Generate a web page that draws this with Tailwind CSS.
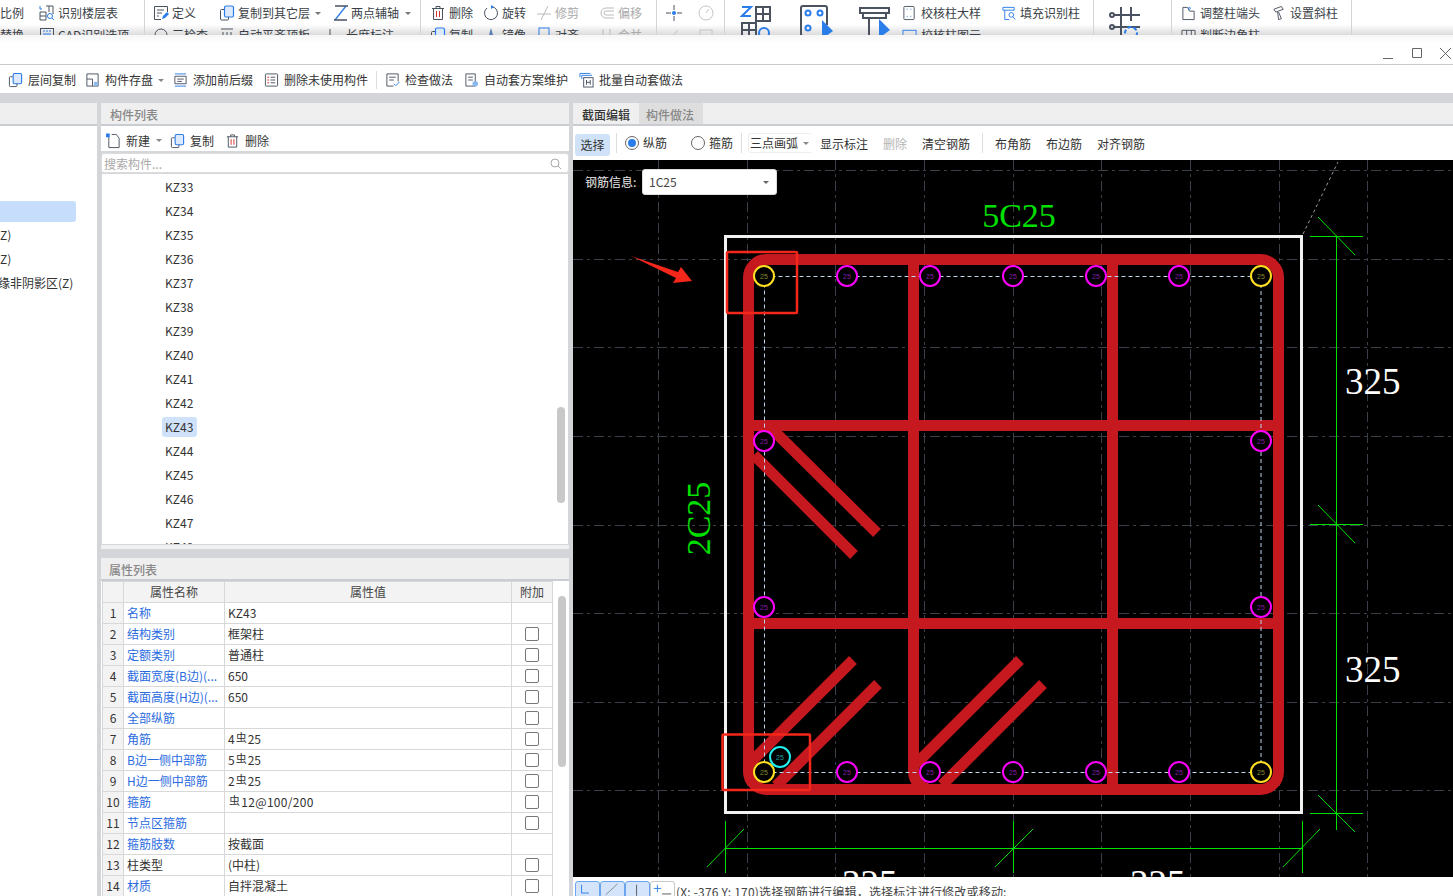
<!DOCTYPE html>
<html lang="zh-CN">
<head>
  <meta charset="UTF-8">
  <title>截面编辑</title>
  <script src="https://cdn.jsdelivr.net/npm/@tailwindcss/browser@4"></script>
</head>
<body class="bg-white">
  <!-- shared icons -->
  <svg class="hidden">
    <symbol id="i-copy" viewBox="0 0 16 16"><rect x="5.5" y="1" width="9" height="11" rx="1.5" fill="#dbe9fb" stroke="#2b7de9" stroke-width="1.2"/><path d="M5 4.5H2.5a1 1 0 0 0-1 1V14a1 1 0 0 0 1 1h6a1 1 0 0 0 1-1v-2" fill="none" stroke="#4a5260"/></symbol>
    <symbol id="i-trash" viewBox="0 0 16 16"><path d="M2 3.5h12M6 3.5V1.5h4v2M3.5 3.5v11h9v-11" fill="none" stroke="#4a5260"/><path d="M6.5 6v6M9.5 6v6" stroke="#d9302c"/></symbol>
    <symbol id="i-doc" viewBox="0 0 16 16"><path d="M14.500 7V1.500h-13v13H8" fill="none" stroke="#4a5260"/><path d="M4 5h7M4 8h5M4 11h2" stroke="#4a5260"/><path d="M9 14l1-3 4-4 2 2-4 4z" fill="#2b7de9"/></symbol>
    <symbol id="i-cols" viewBox="0 0 16 16"><path d="M2 2h12v3H2zM4 5v10h5" fill="none" stroke="#2b7de9"/><circle cx="11" cy="10" r="2.500" fill="none" stroke="#2b7de9"/><path d="M13 12l2 3" stroke="#2b7de9"/></symbol>
  </svg>

  <div class="w-[1453px] h-[896px] overflow-hidden flex flex-col text-[12px] text-[#333] font-['Noto_Sans_CJK_SC','Noto_Sans',sans-serif]">

    <!-- ribbon, cut off by the window on top of it -->
    <div class="h-[35px] shrink-0 flex overflow-hidden bg-gradient-to-b from-white from-70% to-[#dcdcdc] leading-[22px] text-[#3a3f47]">
      <div class="w-[145px] shrink-0 border-r border-[#d4d4d4] pt-[2px]">
        <div class="flex h-[22px] items-center"><span class="w-[39px] -ml-[12px]">量比例</span><svg class="w-4 h-4 ml-[12px]" viewBox="0 0 16 16" fill="none" stroke="#4a5260"><path d="M1 7h6v8H1zM1 11h6M7 1h7v8M10 1v6" /><path d="M1 1v3h2" stroke="#2b7de9"/><circle cx="11" cy="11" r="2.500" stroke="#2b7de9"/><path d="M13 13l2 2" stroke="#2b7de9"/></svg><span class="ml-[3px]">识别楼层表</span></div>
        <div class="flex h-[22px] items-center"><span class="-ml-[12px] w-[51px]">线替换</span><svg class="w-4 h-4" viewBox="0 0 16 16" fill="none" stroke="#4a5260"><rect x="1.500" y="1.500" width="13" height="12"/><path d="M4 4h2M7 4h2M10 4h2M4 7h8" stroke="#2b7de9"/></svg><span class="ml-[3px]">CAD识别选项</span></div>
      </div>
      <div class="w-[276px] shrink-0 border-r border-[#d4d4d4] pt-[2px]">
        <div class="flex h-[22px] items-center">
          <svg class="w-4 h-4 ml-[8px]" viewBox="0 0 16 16"><use href="#i-doc"/></svg><span class="ml-[3px] w-[24px]">定义</span>
          <svg class="w-4 h-4 ml-[23px]"><use href="#i-copy"/></svg><span class="ml-[3px] w-[72px]">复制到其它层</span><span class="w-0 h-0 ml-[5px] border-x-[3px] border-t-[3px] border-x-transparent border-t-[#777]"></span>
          <svg class="w-4 h-4 ml-[12px]" viewBox="0 0 16 16" fill="none" stroke="#2b7de9" stroke-width="1.300"><path d="M2 15L13 1"/><path d="M2 1h13M1 15h13" stroke="#4a5260"/></svg><span class="ml-[2px] w-[48px]">两点辅轴</span><span class="w-0 h-0 ml-[6px] border-x-[3px] border-t-[3px] border-x-transparent border-t-[#777]"></span>
        </div>
        <div class="flex h-[22px] items-center">
          <svg class="w-4 h-4 ml-[8px]" viewBox="0 0 16 16" fill="none" stroke="#4a5260"><circle cx="8" cy="8" r="6"/></svg><span class="ml-[3px] w-[36px]">三检查</span>
          <svg class="w-4 h-4 ml-[11px]" viewBox="0 0 16 16" fill="none" stroke="#4a5260"><path d="M2 2h12M4 5v9M8 5v9M12 5v9"/></svg><span class="ml-[3px] w-[72px]">自动平齐顶板</span>
          <svg class="w-4 h-4 ml-[18px]" viewBox="0 0 16 16" fill="none" stroke="#4a5260"><path d="M2 2v12h12"/></svg><span class="ml-[2px]">长度标注</span>
        </div>
      </div>
      <div class="w-[236px] shrink-0 border-r border-[#d4d4d4] pt-[2px]">
        <div class="flex h-[22px] items-center">
          <svg class="w-4 h-4 ml-[9px]"><use href="#i-trash"/></svg><span class="ml-[3px] w-[24px]">删除</span>
          <svg class="w-4 h-4 ml-[10px]" viewBox="0 0 16 16" fill="none" stroke="#4a5260"><path d="M9 1.700A6.500 6.500 0 1 1 4 3"/><path d="M8 0v4l3-2z" fill="#2b7de9" stroke="none"/></svg><span class="ml-[3px] w-[24px]">旋转</span>
          <svg class="w-4 h-4 ml-[10px]" viewBox="0 0 16 16" fill="none" stroke="#bbb"><path d="M1 9h14M12 1L5 15"/></svg><span class="ml-[3px] w-[24px] text-[#aaa]">修剪</span>
          <svg class="w-4 h-4 ml-[20px]" viewBox="0 0 16 16" fill="none" stroke="#bbb"><path d="M15 3H7a5 5 0 0 0 0 10h8M15 6H7a2 2 0 0 0 0 4h8"/></svg><span class="ml-[3px] text-[#aaa]">偏移</span>
        </div>
        <div class="flex h-[22px] items-center">
          <svg class="w-4 h-4 ml-[9px]"><use href="#i-copy"/></svg><span class="ml-[3px] w-[24px]">复制</span>
          <svg class="w-4 h-4 ml-[10px]" viewBox="0 0 16 16"><path d="M8 1l4 14H4z" fill="#5d7db5"/></svg><span class="ml-[3px] w-[24px]">镜像</span>
          <svg class="w-4 h-4 ml-[10px]" viewBox="0 0 16 16" fill="none" stroke="#2b7de9"><rect x="3" y="1" width="10" height="11"/></svg><span class="ml-[3px] w-[24px]">对齐</span>
          <svg class="w-4 h-4 ml-[20px]" viewBox="0 0 16 16" fill="none" stroke="#bbb"><path d="M4 2v12M11 2v12"/></svg><span class="ml-[3px] text-[#aaa]">合并</span>
        </div>
      </div>
      <div class="w-[68px] shrink-0 border-r border-[#d4d4d4] pt-[2px]">
        <div class="flex h-[22px] items-center gap-[16px] pl-[9px]">
          <svg class="w-4 h-4" viewBox="0 0 16 16" fill="none" stroke="#4a5260"><path d="M8 0v5M8 11v5M0 8h5M11 8h5"/><circle cx="8" cy="8" r="2" fill="#2b7de9" stroke="none"/></svg>
          <svg class="w-4 h-4" viewBox="0 0 16 16" fill="none" stroke="#c4c4c4"><circle cx="8" cy="8" r="7"/><path d="M8 8l3-4"/></svg>
        </div>
        <div class="flex h-[22px] items-center gap-[16px] pl-[9px]">
          <svg class="w-4 h-4" viewBox="0 0 16 16" fill="none" stroke="#c4c4c4"><path d="M3 13L12 3"/></svg>
          <svg class="w-4 h-4" viewBox="0 0 16 16" fill="none" stroke="#c4c4c4"><rect x="2" y="3" width="12" height="10"/></svg>
        </div>
      </div>
      <div class="w-[369px] shrink-0 flex border-r border-[#d4d4d4] pt-[5px]">
        <svg class="w-[32px] h-[36px] ml-[15px] shrink-0" viewBox="0 0 32 36" fill="none" stroke="#4a5260" stroke-width="2"><path d="M2 2h9L2 11h9" stroke="#2b7de9"/><path d="M16 2h14v14H16zM23 2v14M16 9h14M2 18h14v14H2zM9 18v14M2 25h14"/><circle cx="24" cy="28" r="5" stroke="#2b7de9"/></svg>
        <svg class="w-[34px] h-[36px] ml-[28px] shrink-0" viewBox="0 0 34 36" fill="none" stroke="#4a5260" stroke-width="2"><path d="M27 20V3a2 2 0 0 0-2-2H3a2 2 0 0 0-2 2v26a2 2 0 0 0 2 2h16"/><circle cx="8" cy="8" r="2.500" stroke="#2b7de9"/><circle cx="20" cy="8" r="2.500" stroke="#2b7de9"/><circle cx="8" cy="23" r="2.500" stroke="#2b7de9"/><path d="M22 15l11 11-11 8z" fill="#2b7de9" stroke="none"/></svg>
        <svg class="w-[32px] h-[36px] ml-[25px] shrink-0" viewBox="0 0 32 36" fill="none" stroke="#4a5260" stroke-width="2"><path d="M1 3h29v5H1zM4 8v5h23V8M10 13v19h6"/><path d="M20 14l11 11-11 8z" fill="#2b7de9" stroke="none"/></svg>
        <div class="ml-[11px] -mt-[3px]">
          <div class="flex h-[22px] items-center">
            <svg class="w-[15px] h-4" viewBox="0 0 16 16" fill="none" stroke="#4a5260"><rect x="2" y="1" width="11" height="14" rx="1"/><path d="M5 4h1M9 4h1M5 12h1M10 11l-1 1" stroke="#2b7de9"/></svg><span class="ml-[4px] w-[60px]">校核柱大样</span>
            <svg class="w-[15px] h-4 ml-[20px]" viewBox="0 0 16 16"><use href="#i-cols"/></svg><span class="ml-[4px]">填充识别柱</span>
          </div>
          <div class="flex h-[22px] items-center">
            <svg class="w-[15px] h-4" viewBox="0 0 16 16" fill="none" stroke="#2b7de9"><rect x="1" y="3" width="14" height="6"/></svg><span class="ml-[4px]">校核柱图元</span>
          </div>
        </div>
      </div>
      <div class="w-[78px] shrink-0 border-r border-[#d4d4d4] pt-[5px] pl-[15px]">
        <svg class="w-[32px] h-[36px]" viewBox="0 0 32 36" fill="none" stroke="#4a5260" stroke-width="2"><path d="M12 2v34M22 2v14M5 10h26M5 22h26"/><circle cx="3" cy="10" r="2"/><circle cx="3" cy="22" r="2"/><circle cx="22" cy="28" r="6" stroke="#2b7de9" stroke-dasharray="4 2"/></svg>
      </div>
      <div class="w-[180px] shrink-0 border-r border-[#d4d4d4] pt-[2px]">
        <div class="flex h-[22px] items-center">
          <svg class="w-[15px] h-4 ml-[9px]" viewBox="0 0 16 16" fill="none" stroke="#4a5260"><path d="M2 2h5l2 4h5v9H2z"/><circle cx="9" cy="3" r="1" stroke="#2b7de9"/></svg><span class="ml-[4px] w-[60px]">调整柱端头</span>
          <svg class="w-[15px] h-4 ml-[12px]" viewBox="0 0 16 16" fill="none" stroke="#4a5260"><path d="M2 4l8-3 2 3-8 3zM6 7l1 8 3-1-3-7"/></svg><span class="ml-[3px]">设置斜柱</span>
        </div>
        <div class="flex h-[22px] items-center">
          <svg class="w-[15px] h-4 ml-[9px]" viewBox="0 0 16 16" fill="none" stroke="#4a5260"><path d="M1 3h14v10H1zM6 3v10M11 3v10"/></svg><span class="ml-[4px]">判断边角柱</span>
        </div>
      </div>
      <div class="flex-1"></div>
    </div>

    <!-- window title bar -->
    <div class="h-[30px] shrink-0 bg-gradient-to-b from-[#f6f6f6] to-white to-30% border-b border-[#c6cace] flex items-center justify-end pt-[6px]">
      <svg class="w-[70px] h-[14px]" viewBox="0 0 70 14" fill="none" stroke="#666"><path d="M0 12.500H10M29.500 2.500h9v9h-9zM57 2l11 11M68 2L57 13"/></svg>
    </div>

    <!-- main toolbar -->
    <div class="h-[28px] shrink-0 bg-white flex items-center pt-[2px]">
      <svg class="w-[15px] h-4 ml-[8px]"><use href="#i-copy"/></svg><span class="ml-[5px] w-[48px]">层间复制</span>
      <svg class="w-[15px] h-4 ml-[9px]" viewBox="0 0 16 16" fill="none" stroke="#4a5260"><path d="M2 1.500h12v13H2zM2 7h6v7.500"/><rect x="9.500" y="10" width="4" height="4" fill="#8bb8ef" stroke="none"/></svg><span class="ml-[5px] w-[48px]">构件存盘</span>
      <span class="w-0 h-0 ml-[5px] border-x-[3px] border-t-[3px] border-x-transparent border-t-[#888]"></span>
      <svg class="w-[15px] h-4 ml-[9px]" viewBox="0 0 16 16" fill="none" stroke="#2b7de9"><path d="M2 1.500h12M2 14.500h12"/><path d="M2 4h12v8H2zM4.500 7h7M4.500 9.500h5" stroke="#4a5260"/></svg><span class="ml-[5px] w-[60px]">添加前后缀</span>
      <svg class="w-[15px] h-4 ml-[11px]" viewBox="0 0 16 16" fill="none" stroke="#4a5260"><rect x="1.500" y="1.500" width="13" height="13" rx="1"/><path d="M7 5h5M7 8h5M7 11h5"/><path d="M3.500 5h2M3.500 8h2M3.500 11h2" stroke="#e0322c"/></svg><span class="ml-[5px] w-[84px]">删除未使用构件</span>
      <span class="w-px h-[18px] ml-[8px] bg-[#ddd]"></span>
      <svg class="w-[15px] h-4 ml-[8px]" viewBox="0 0 16 16" fill="none" stroke="#4a5260"><path d="M9 14.500H2V1.500h12v8M4.500 5h7M4.500 8h5"/><path d="M9.500 12l2 2 4-4" stroke="#2b7de9"/></svg><span class="ml-[5px] w-[48px]">检查做法</span>
      <svg class="w-[15px] h-4 ml-[11px]" viewBox="0 0 16 16" fill="none" stroke="#4a5260"><path d="M2 1.500h10v13H2zM4.500 5h5M4.500 8h5"/><circle cx="12" cy="12" r="3" fill="#8bb8ef" stroke="none"/></svg><span class="ml-[5px] w-[84px]">自动套方案维护</span>
      <svg class="w-[15px] h-4 ml-[11px]" viewBox="0 0 16 16" fill="none" stroke="#4a5260"><path d="M1 5V1h11" stroke="#2b7de9"/><path d="M3 7V3h11" stroke="#2b7de9"/><rect x="5" y="5.500" width="10" height="10"/><path d="M8 8v5M12 8v5M8 10.500h4"/></svg><span class="ml-[5px]">批量自动套做法</span>
    </div>

    <!-- panels -->
    <div class="flex-1 min-h-0 flex bg-[#d3d5d9] pt-[10px]">

      <!-- navigation tree (mostly cut off) -->
      <div class="w-[97px] shrink-0 bg-white flex flex-col">
        <div class="h-[23px] shrink-0 bg-[#efefef] border-b-2 border-[#c9ccd0]"></div>
        <div class="pt-[75px] flex flex-col">
          <div class="h-[21px] w-[76px] rounded-r-[3px] bg-[#c6ddfb]"></div>
          <div class="h-[24px] mt-[1px] leading-[24px] whitespace-nowrap">Z)</div>
          <div class="h-[24px] leading-[24px] whitespace-nowrap">Z)</div>
          <div class="h-[24px] leading-[24px] whitespace-nowrap -ml-[2px]">缘非阴影区(Z)</div>
        </div>
      </div>

      <!-- component list and properties -->
      <div class="w-[468px] ml-[4px] shrink-0 flex flex-col">
        <div class="h-[23px] shrink-0 bg-[#efefef] border-b-2 border-[#c9ccd0] px-[9px] leading-[23px] font-medium text-[#888]">构件列表</div>
        <div class="h-[27px] shrink-0 bg-white border-b-2 border-[#d5d7da] flex items-center pt-[4px]">
          <svg class="w-[15px] h-4 ml-[5px]" viewBox="0 0 16 16" fill="none" stroke="#4a5260"><path d="M3 3v12h11V5l-3-4H6"/><rect x="0" y="0" width="4" height="4" fill="#2b7de9" stroke="none"/></svg><span class="ml-[5px] w-[24px]">新建</span>
          <span class="w-0 h-0 ml-[6px] border-x-[3px] border-t-[3px] border-x-transparent border-t-[#888]"></span>
          <svg class="w-[15px] h-4 ml-[8px]"><use href="#i-copy"/></svg><span class="ml-[5px] w-[24px]">复制</span>
          <svg class="w-[15px] h-4 ml-[11px]"><use href="#i-trash"/></svg><span class="ml-[5px]">删除</span>
        </div>
        <div class="h-[20px] shrink-0 bg-white border border-[#dcdcdc] rounded-[3px] flex items-center justify-between pl-[2px] pr-[6px] pt-px text-[#aaa]">
          <span>搜索构件...</span>
          <svg class="w-3 h-3" viewBox="0 0 12 12" fill="none" stroke="#aaa"><circle cx="5" cy="5" r="4"/><path d="M8 8l3 3"/></svg>
        </div>
        <div class="relative h-[372px] shrink-0 bg-white border border-[#d5d7da] overflow-hidden pl-[60px] pt-px">
          <div class="h-[24px] leading-[24px] pl-[3px]">KZ33</div>
          <div class="h-[24px] leading-[24px] pl-[3px]">KZ34</div>
          <div class="h-[24px] leading-[24px] pl-[3px]">KZ35</div>
          <div class="h-[24px] leading-[24px] pl-[3px]">KZ36</div>
          <div class="h-[24px] leading-[24px] pl-[3px]">KZ37</div>
          <div class="h-[24px] leading-[24px] pl-[3px]">KZ38</div>
          <div class="h-[24px] leading-[24px] pl-[3px]">KZ39</div>
          <div class="h-[24px] leading-[24px] pl-[3px]">KZ40</div>
          <div class="h-[24px] leading-[24px] pl-[3px]">KZ41</div>
          <div class="h-[24px] leading-[24px] pl-[3px]">KZ42</div>
          <div class="h-[24px] flex items-center"><span class="h-[20px] w-[35px] pl-[3px] leading-[20px] rounded-[3px] bg-[#cfe2f9]">KZ43</span></div>
          <div class="h-[24px] leading-[24px] pl-[3px]">KZ44</div>
          <div class="h-[24px] leading-[24px] pl-[3px]">KZ45</div>
          <div class="h-[24px] leading-[24px] pl-[3px]">KZ46</div>
          <div class="h-[24px] leading-[24px] pl-[3px]">KZ47</div>
          <div class="h-[24px] leading-[24px] pl-[3px]">KZ48</div>
          <div class="absolute right-[3px] top-[233px] w-[8px] h-[96px] rounded-full bg-[#c8c8c8]"></div>
        </div>
        <div class="h-[4px] shrink-0 bg-[#f0f0f0]"></div>
        <div class="h-[9px] shrink-0"></div>
        <div class="h-[23px] shrink-0 bg-[#efefef] border-b-2 border-[#c9ccd0] px-[8px] leading-[23px] font-medium text-[#888]">属性列表</div>
        <div class="relative flex-1 min-h-0 bg-white overflow-hidden pl-px">
          <table class="table-fixed border-collapse w-[450px] text-[12px]">
            <colgroup><col class="w-[21px]"><col class="w-[101px]"><col class="w-[287px]"><col class="w-[41px]"></colgroup>
            <thead>
              <tr class="h-[21px] bg-[#f3f3f3] font-normal text-[#444]">
                <th class="border border-[#d8d8d8] font-normal"></th>
                <th class="border border-[#d8d8d8] font-normal">属性名称</th>
                <th class="border border-[#d8d8d8] font-normal">属性值</th>
                <th class="border border-[#d8d8d8] font-normal">附加</th>
              </tr>
            </thead>
            <tbody>
              <tr class="h-[21px]"><td class="border border-[#d8d8d8] bg-[#f3f3f3] text-center">1</td><td class="border border-[#d8d8d8] px-[3px] text-[#2a6be0] whitespace-nowrap overflow-hidden">名称</td><td class="border border-[#d8d8d8] px-[3px]">KZ43</td><td class="border border-[#d8d8d8]"></td></tr>
              <tr class="h-[21px]"><td class="border border-[#d8d8d8] bg-[#f3f3f3] text-center">2</td><td class="border border-[#d8d8d8] px-[3px] text-[#2a6be0] whitespace-nowrap overflow-hidden">结构类别</td><td class="border border-[#d8d8d8] px-[3px]">框架柱</td><td class="border border-[#d8d8d8]"><div class="w-[14px] h-[14px] mx-auto rounded-[2px] border border-[#777]"></div></td></tr>
              <tr class="h-[21px]"><td class="border border-[#d8d8d8] bg-[#f3f3f3] text-center">3</td><td class="border border-[#d8d8d8] px-[3px] text-[#2a6be0] whitespace-nowrap overflow-hidden">定额类别</td><td class="border border-[#d8d8d8] px-[3px]">普通柱</td><td class="border border-[#d8d8d8]"><div class="w-[14px] h-[14px] mx-auto rounded-[2px] border border-[#777]"></div></td></tr>
              <tr class="h-[21px]"><td class="border border-[#d8d8d8] bg-[#f3f3f3] text-center">4</td><td class="border border-[#d8d8d8] px-[3px] text-[#2a6be0] whitespace-nowrap overflow-hidden">截面宽度(B边)(...</td><td class="border border-[#d8d8d8] px-[3px]">650</td><td class="border border-[#d8d8d8]"><div class="w-[14px] h-[14px] mx-auto rounded-[2px] border border-[#777]"></div></td></tr>
              <tr class="h-[21px]"><td class="border border-[#d8d8d8] bg-[#f3f3f3] text-center">5</td><td class="border border-[#d8d8d8] px-[3px] text-[#2a6be0] whitespace-nowrap overflow-hidden">截面高度(H边)(...</td><td class="border border-[#d8d8d8] px-[3px]">650</td><td class="border border-[#d8d8d8]"><div class="w-[14px] h-[14px] mx-auto rounded-[2px] border border-[#777]"></div></td></tr>
              <tr class="h-[21px]"><td class="border border-[#d8d8d8] bg-[#f3f3f3] text-center">6</td><td class="border border-[#d8d8d8] px-[3px] text-[#2a6be0] whitespace-nowrap overflow-hidden">全部纵筋</td><td class="border border-[#d8d8d8] px-[3px]"></td><td class="border border-[#d8d8d8]"><div class="w-[14px] h-[14px] mx-auto rounded-[2px] border border-[#777]"></div></td></tr>
              <tr class="h-[21px]"><td class="border border-[#d8d8d8] bg-[#f3f3f3] text-center">7</td><td class="border border-[#d8d8d8] px-[3px] text-[#2a6be0] whitespace-nowrap overflow-hidden">角筋</td><td class="border border-[#d8d8d8] px-[3px] leading-none">4<span class="text-[11px] px-px relative -top-[2px]">虫</span>25</td><td class="border border-[#d8d8d8]"><div class="w-[14px] h-[14px] mx-auto rounded-[2px] border border-[#777]"></div></td></tr>
              <tr class="h-[21px]"><td class="border border-[#d8d8d8] bg-[#f3f3f3] text-center">8</td><td class="border border-[#d8d8d8] px-[3px] text-[#2a6be0] whitespace-nowrap overflow-hidden">B边一侧中部筋</td><td class="border border-[#d8d8d8] px-[3px] leading-none">5<span class="text-[11px] px-px relative -top-[2px]">虫</span>25</td><td class="border border-[#d8d8d8]"><div class="w-[14px] h-[14px] mx-auto rounded-[2px] border border-[#777]"></div></td></tr>
              <tr class="h-[21px]"><td class="border border-[#d8d8d8] bg-[#f3f3f3] text-center">9</td><td class="border border-[#d8d8d8] px-[3px] text-[#2a6be0] whitespace-nowrap overflow-hidden">H边一侧中部筋</td><td class="border border-[#d8d8d8] px-[3px] leading-none">2<span class="text-[11px] px-px relative -top-[2px]">虫</span>25</td><td class="border border-[#d8d8d8]"><div class="w-[14px] h-[14px] mx-auto rounded-[2px] border border-[#777]"></div></td></tr>
              <tr class="h-[21px]"><td class="border border-[#d8d8d8] bg-[#f3f3f3] text-center">10</td><td class="border border-[#d8d8d8] px-[3px] text-[#2a6be0] whitespace-nowrap overflow-hidden">箍筋</td><td class="border border-[#d8d8d8] px-[3px] leading-none tracking-[0.3px]"><span class="text-[11px] px-px relative -top-[2px]">虫</span>12@100/200</td><td class="border border-[#d8d8d8]"><div class="w-[14px] h-[14px] mx-auto rounded-[2px] border border-[#777]"></div></td></tr>
              <tr class="h-[21px]"><td class="border border-[#d8d8d8] bg-[#f3f3f3] text-center">11</td><td class="border border-[#d8d8d8] px-[3px] text-[#2a6be0] whitespace-nowrap overflow-hidden">节点区箍筋</td><td class="border border-[#d8d8d8] px-[3px]"></td><td class="border border-[#d8d8d8]"><div class="w-[14px] h-[14px] mx-auto rounded-[2px] border border-[#777]"></div></td></tr>
              <tr class="h-[21px]"><td class="border border-[#d8d8d8] bg-[#f3f3f3] text-center">12</td><td class="border border-[#d8d8d8] px-[3px] text-[#2a6be0] whitespace-nowrap overflow-hidden">箍筋肢数</td><td class="border border-[#d8d8d8] px-[3px]">按截面</td><td class="border border-[#d8d8d8]"></td></tr>
              <tr class="h-[21px]"><td class="border border-[#d8d8d8] bg-[#f3f3f3] text-center">13</td><td class="border border-[#d8d8d8] px-[3px] whitespace-nowrap overflow-hidden">柱类型</td><td class="border border-[#d8d8d8] px-[3px]">(中柱)</td><td class="border border-[#d8d8d8]"><div class="w-[14px] h-[14px] mx-auto rounded-[2px] border border-[#777]"></div></td></tr>
              <tr class="h-[21px]"><td class="border border-[#d8d8d8] bg-[#f3f3f3] text-center">14</td><td class="border border-[#d8d8d8] px-[3px] text-[#2a6be0] whitespace-nowrap overflow-hidden">材质</td><td class="border border-[#d8d8d8] px-[3px]">自拌混凝土</td><td class="border border-[#d8d8d8]"><div class="w-[14px] h-[14px] mx-auto rounded-[2px] border border-[#777]"></div></td></tr>
            </tbody>
          </table>
          <div class="absolute right-[3px] top-[15px] w-[8px] h-[171px] rounded-full bg-[#c8c8c8]"></div>
        </div>
      </div>

      <!-- section editor -->
      <div class="w-[880px] ml-[4px] shrink-0 flex flex-col bg-white">
        <div class="h-[23px] shrink-0 bg-[#efefef] border-b-2 border-[#c9ccd0] flex leading-[23px] font-medium">
          <div class="w-[66px] pl-[9px] text-[#333]">截面编辑</div>
          <div class="w-[64px] pl-[7px] bg-[#dedede] text-[#888]">构件做法</div>
        </div>
        <div class="h-[34px] shrink-0 flex items-center">
          <span class="ml-[2px] w-[35px] h-[22px] mt-[3px] text-center leading-[22px] rounded-[3px] bg-[#cfe2f7]">选择</span>
          <span class="w-px h-[20px] ml-[6px] bg-[#ddd]"></span>
          <span class="ml-[8px] w-[14px] h-[14px] rounded-full border border-[#666] bg-white flex items-center justify-center"><span class="w-[8px] h-[8px] rounded-full bg-[#2b7de9]"></span></span>
          <span class="ml-[4px] w-[24px]">纵筋</span>
          <span class="ml-[24px] w-[14px] h-[14px] rounded-full border border-[#666] bg-white"></span>
          <span class="ml-[4px] w-[24px]">箍筋</span>
          <span class="w-px h-[20px] ml-[8px] bg-[#ddd]"></span>
          <div class="ml-[6px] w-[65px] h-[20px] shrink-0 flex items-center pl-px rounded-[3px] border border-[#efefef] border-r-0">
            <span class="w-[48px]">三点画弧</span>
            <span class="w-0 h-0 ml-[5px] border-x-[3px] border-t-[3px] border-x-transparent border-t-[#888]"></span>
          </div>
          <span class="ml-[7px] w-[48px] mt-[2px]">显示标注</span>
          <span class="ml-[15px] w-[24px] mt-[2px] text-[#b5b5b5]">删除</span>
          <span class="ml-[15px] w-[48px] mt-[2px]">清空钢筋</span>
          <span class="w-px h-[20px] ml-[12px] bg-[#ddd]"></span>
          <span class="ml-[12px] w-[36px] mt-[2px]">布角筋</span>
          <span class="ml-[15px] w-[36px] mt-[2px]">布边筋</span>
          <span class="ml-[15px] mt-[2px]">对齐钢筋</span>
        </div>

        <!-- drawing canvas -->
        <div class="relative h-[717px] shrink-0 bg-black overflow-hidden">
          <svg class="absolute inset-0 w-[880px] h-[717px]" viewBox="573 160 880 717" fill="none">
            <!-- grid -->
            <g stroke="#3a3f4a" stroke-dasharray="10 4 3 4">
              <path d="M573 170.500H1453M573 259.500H1453M573 347.500H1453M573 436.500H1453M573 525.500H1453M573 613.500H1453M573 702.500H1453M573 790.500H1453M573 879.500H1453"/>
              <path d="M658.500 160V877M747.500 160V877M835.500 160V877M924.500 160V877M1013.500 160V877M1101.500 160V877M1190.500 160V877M1279.500 160V877M1367.500 160V877"/>
            </g>
            <path d="M1303 234L1338 162" stroke="#999" stroke-dasharray="3 3"/>
            <!-- column outline -->
            <rect x="725.500" y="236.500" width="576" height="576" stroke="#f2f2f2" stroke-width="3"/>
            <!-- stirrups -->
            <g stroke="#c5181f" stroke-width="11">
              <rect x="748.500" y="259.500" width="530" height="530" rx="18"/>
              <path d="M913.500 259V770Q913.500 785 928 789M1112.500 259V790M748 425.500H1279M748 623.500H1279"/>
              <path d="M771 428L877 533M754 455L854 555M853 660L750 763M878 684L776 786M1020 660L916 764M1043 684L942 785"/>
            </g>
            <!-- layout lines -->
            <rect x="764.500" y="276.500" width="496.500" height="496" stroke="#bcd6f2" stroke-dasharray="4 3"/>
            <!-- rebars -->
            <g stroke="#ff00ff" stroke-width="2" fill="#000">
              <circle cx="847" cy="276" r="10"/><circle cx="930" cy="276" r="10"/><circle cx="1013" cy="276" r="10"/><circle cx="1096" cy="276" r="10"/><circle cx="1179" cy="276" r="10"/>
              <circle cx="847" cy="772" r="10"/><circle cx="930" cy="772" r="10"/><circle cx="1013" cy="772" r="10"/><circle cx="1096" cy="772" r="10"/><circle cx="1179" cy="772" r="10"/>
              <circle cx="764" cy="441" r="10"/><circle cx="1261" cy="441" r="10"/><circle cx="764" cy="607" r="10"/><circle cx="1261" cy="607" r="10"/>
            </g>
            <g stroke="#ffdf20" stroke-width="2" fill="#000">
              <circle cx="764" cy="276" r="10"/><circle cx="1261" cy="276" r="10"/><circle cx="764" cy="772" r="10"/><circle cx="1261" cy="772" r="10"/>
            </g>
            <circle cx="780" cy="757" r="10" stroke="#22f0f0" stroke-width="2" fill="#000"/>
            <g fill="#8a1aa8" font-size="7" text-anchor="middle" font-family="'Liberation Sans',sans-serif">
              <text x="847" y="279">25</text><text x="930" y="279">25</text><text x="1013" y="279">25</text><text x="1096" y="279">25</text><text x="1179" y="279">25</text>
              <text x="847" y="775">25</text><text x="930" y="775">25</text><text x="1013" y="775">25</text><text x="1096" y="775">25</text><text x="1179" y="775">25</text>
              <text x="764" y="444">25</text><text x="1261" y="444">25</text><text x="764" y="610">25</text><text x="1261" y="610">25</text>
              <text x="764" y="279" fill="#8a8a30">25</text><text x="1261" y="279" fill="#8a8a30">25</text><text x="764" y="775" fill="#8a8a30">25</text><text x="1261" y="775" fill="#8a8a30">25</text>
              <text x="780" y="760" fill="#20a0a0">25</text>
            </g>
            <!-- dimensions -->
            <g stroke="#00e000">
              <path d="M1336.500 236V830M1310 236.500H1363M1310 524.500H1363M1310 813.500H1363M1318 217L1355 255M1318 505L1355 543M1318 795L1355 832"/>
              <path d="M725 848.500H1302M725.500 821V873M1013.500 821V873M1302.500 821V873M707 867L744 829M995 867L1033 829M1283 867L1320 829"/>
            </g>
            <g font-family="'Liberation Serif',serif">
              <text x="1019" y="227" font-size="34" text-anchor="middle" fill="#00e000">5C25</text>
              <text transform="translate(710 518.500) rotate(-90)" font-size="34" text-anchor="middle" fill="#00e000">2C25</text>
              <g fill="#fff" font-size="37">
                <text x="1345" y="394">325</text>
                <text x="1345" y="682">325</text>
                <text x="842" y="896">325</text>
                <text x="1130" y="896">325</text>
              </g>
            </g>
            <!-- red markup -->
            <rect x="727" y="252" width="70" height="61" rx="1" stroke="#f5261a" stroke-width="2.500"/>
            <rect x="722.500" y="734.500" width="87.500" height="55.500" rx="1" stroke="#f5261a" stroke-width="2.500"/>
            <path d="M631 256L678 272L681 267L692 281L673 283L676 278z" fill="#f5261a"/>
          </svg>
          <div class="absolute left-[12px] top-[9px] h-[26px] flex items-center text-[#e8e8e8]">
            <span class="w-[57px]">钢筋信息:</span>
            <div class="w-[135px] h-[26px] bg-white rounded-[3px] border border-[#ddd] flex items-center justify-between pl-[6px] pr-[7px] text-[#444]">
              <span>1C25</span>
              <span class="w-0 h-0 border-x-[3px] border-t-[3px] border-x-transparent border-t-[#666]"></span>
            </div>
          </div>
        </div>

        <!-- status bar -->
        <div class="flex-1 min-h-0 flex items-start pl-[2px] pt-[4px] overflow-hidden">
          <svg class="w-[25px] h-[25px] rounded-[3px] border border-[#6aa5ee] bg-[#d3e4fb] shrink-0" viewBox="0 0 25 25" fill="none" stroke="#2b7de9"><path d="M6 3v9h8"/></svg>
          <svg class="w-[25px] h-[25px] rounded-[3px] border border-[#6aa5ee] bg-[#d3e4fb] shrink-0" viewBox="0 0 25 25" fill="none" stroke="#888"><path d="M5 14L18 2"/></svg>
          <svg class="w-[25px] h-[25px] rounded-[3px] border border-[#6aa5ee] bg-[#d3e4fb] shrink-0" viewBox="0 0 25 25" fill="none" stroke="#555"><path d="M11.500 3v12"/></svg>
          <svg class="w-[25px] h-[25px] rounded-[3px] border border-[#c8c8c8] bg-white shrink-0" viewBox="0 0 25 25" fill="none" stroke="#2b7de9"><path d="M3 7h8M7 3v8"/><path d="M12 13h10" stroke="#555"/></svg>
          <span class="ml-px mt-[2px] whitespace-nowrap text-[12px] tracking-[0.2px] leading-[18px] text-[#444]">(X: -376 Y: 170)选择钢筋进行编辑，选择标注进行修改或移动:</span>
        </div>
      </div>
    </div>
  </div>
</body>
</html>
